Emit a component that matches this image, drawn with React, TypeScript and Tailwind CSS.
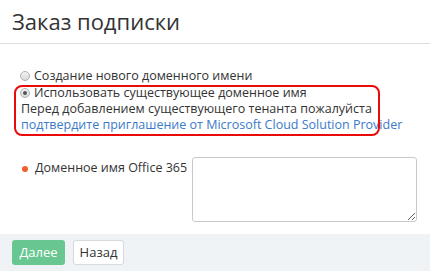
import React from "react";

function Radio({ checked }: { checked?: boolean }) {
  return (
    <span className="inline-flex w-[10px] h-[10px] rounded-full border border-[#b0b0b0] bg-gradient-to-b from-[#f4f4f4] to-[#d9d9d9] items-center justify-center shrink-0">
      {checked && <span className="w-[4px] h-[4px] rounded-full bg-[#555]" />}
    </span>
  );
}

export default function App() {
  return (
    <div className="w-[430px] h-[271px] bg-white flex flex-col font-['Open_Sans',sans-serif] text-[#333]">
      <div className="h-[44px] border-b border-[#dadee3] px-[12px] pt-[6px]">
        <h1 className="text-[22px] leading-[30px] text-[#333] font-normal">Заказ подписки</h1>
      </div>
      <div className="flex-1 pt-[24px]">
        <div className="pl-[20px] text-[12.5px]">
          <div className="h-[16px] leading-[16px] flex items-center gap-[4px]">
            <Radio />
            <span>Создание нового доменного имени</span>
          </div>
          <div className="relative">
            <div className="h-[16px] leading-[16px] flex items-center gap-[4px] mt-[1px]">
              <Radio checked />
              <span>Использовать существующее доменное имя</span>
            </div>
            <div className="h-[16px] leading-[16px] pl-[1px]">
              Перед добавлением существующего тенанта пожалуйста
            </div>
            <div className="h-[16px] leading-[16px] pl-[1px] text-[#3a7ac8]">
              подтвердите приглашение от Microsoft Cloud Solution Provider
            </div>
            <div className="absolute left-[-6px] top-[0px] w-[366px] h-[51px] border-2 border-[#ea0a0a] rounded-[8px] pointer-events-none" />
          </div>
        </div>
        <div className="flex mt-[24px] pl-[22px]">
          <div className="w-[170px] pt-[3px] flex items-start">
            <span className="w-[6px] h-[6px] rounded-full bg-[#f0602c] mt-[6px] mr-[7px] shrink-0" />
            <span className="text-[12.5px] leading-[16px] whitespace-nowrap">Доменное имя Office 365</span>
          </div>
          <textarea className="w-[225px] h-[65px] border border-[#c6cacf] rounded-[3px] bg-white resize" />
        </div>
      </div>
      <div className="h-[37px] bg-[#eff3f6] flex items-start pt-[6px] px-[12px] gap-[8px]">
        <button className="h-[25px] w-[53px] rounded-[3px] bg-[#68c690] text-white text-[13px] leading-[25px]">Далее</button>
        <button className="h-[25px] w-[51px] rounded-[3px] bg-white border border-[#d6dade] text-[#333] text-[13px] leading-[23px]">Назад</button>
      </div>
    </div>
  );
}
